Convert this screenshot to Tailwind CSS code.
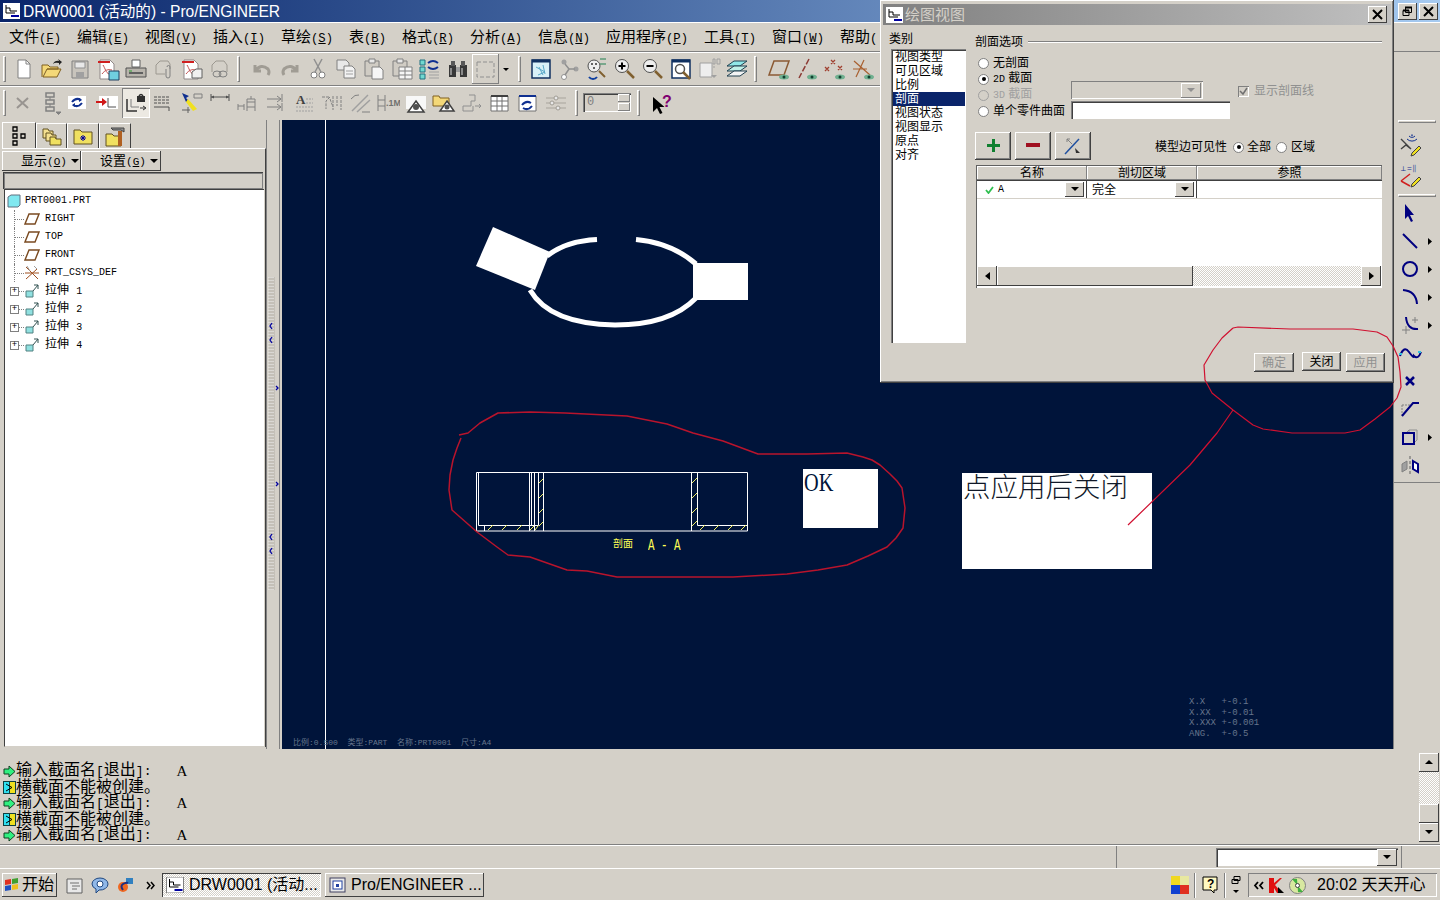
<!DOCTYPE html>
<html lang="zh">
<head>
<meta charset="UTF-8" />
<title>DRW0001 - Pro/ENGINEER</title>
<script src="https://cdn.jsdelivr.net/npm/@tailwindcss/browser@4"></script>
</head>
<body class="bg-[#d4d0c8]">
<div class="relative w-[1440px] h-[900px] overflow-hidden flex flex-col bg-[#d4d0c8] text-black font-['Liberation_Sans','Noto_Sans_CJK_SC',sans-serif]">

  <!-- title bar -->
  <div class="h-[22px] flex-none flex items-center justify-between bg-gradient-to-r from-[#0a246a] to-[#a6caf0] pl-[3px] pr-[2px]">
    <div class="flex items-center gap-[3px]">
      <svg width="17" height="16" viewBox="0 0 17 16"><rect width="17" height="16" fill="#fff"/><path d="M3 2v8h9" fill="none" stroke="#000"/><path d="M3 5h4v3h7" fill="none" stroke="#000"/><path d="M8 13h8" stroke="#0000a0" stroke-width="2"/></svg>
      <span class="text-white text-[15.600px] leading-[22px] pt-[1px]">DRW0001 (活动的) - Pro/ENGINEER</span>
    </div>
    <div class="flex gap-[2px]">
      <div class="w-[19px] h-[17px] flex items-center justify-center bg-[#d4d0c8] shadow-[inset_-1px_-1px_0_#404040,inset_1px_1px_0_#fff]"><svg width="11" height="11" viewBox="0 0 11 11"><path d="M3.5 1.5h6v5h-6zM1 4.5h6v5H1z" fill="#d4d0c8" stroke="#000"/><path d="M3 1.5h7M1 4.5h6" stroke="#000" stroke-width="2"/></svg></div>
      <div class="w-[19px] h-[17px] flex items-center justify-center bg-[#d4d0c8] shadow-[inset_-1px_-1px_0_#404040,inset_1px_1px_0_#fff]"><svg width="11" height="11" viewBox="0 0 11 11"><path d="M1 1l9 9M10 1l-9 9" stroke="#000" stroke-width="2"/></svg></div>
    </div>
  </div>

  <div class="h-[727px] flex-none flex">
    <!-- centre column -->
    <div class="w-[1393px] flex-none flex flex-col">
      <!-- menu -->
      <div class="h-[30px] flex-none flex items-center gap-[16px] pl-[9px] pt-[1px] text-[15px] leading-[28px] border-t border-white border-b border-b-[#808080] whitespace-nowrap">
        <span>文件<span class="font-['Liberation_Mono'] text-[12.200px]">(<u>F</u>)</span></span>
        <span>编辑<span class="font-['Liberation_Mono'] text-[12.200px]">(<u>E</u>)</span></span>
        <span>视图<span class="font-['Liberation_Mono'] text-[12.200px]">(<u>V</u>)</span></span>
        <span>插入<span class="font-['Liberation_Mono'] text-[12.200px]">(<u>I</u>)</span></span>
        <span>草绘<span class="font-['Liberation_Mono'] text-[12.200px]">(<u>S</u>)</span></span>
        <span>表<span class="font-['Liberation_Mono'] text-[12.200px]">(<u>B</u>)</span></span>
        <span>格式<span class="font-['Liberation_Mono'] text-[12.200px]">(<u>R</u>)</span></span>
        <span>分析<span class="font-['Liberation_Mono'] text-[12.200px]">(<u>A</u>)</span></span>
        <span>信息<span class="font-['Liberation_Mono'] text-[12.200px]">(<u>N</u>)</span></span>
        <span>应用程序<span class="font-['Liberation_Mono'] text-[12.200px]">(<u>P</u>)</span></span>
        <span>工具<span class="font-['Liberation_Mono'] text-[12.200px]">(<u>T</u>)</span></span>
        <span>窗口<span class="font-['Liberation_Mono'] text-[12.200px]">(<u>W</u>)</span></span>
        <span>帮助<span class="font-['Liberation_Mono'] text-[12.200px]">(</span></span>
      </div>

      <!-- toolbar 1 -->
      <div class="h-[34px] flex-none flex items-center border-t border-white border-b border-b-[#808080] [&>svg]:flex-none [&>svg]:mx-[2px]">
        <div class="w-[3px] h-[26px] ml-[3px] mr-[4px] border border-white border-r-[#808080] border-b-[#808080]"></div>
        <svg width="24" height="24" viewBox="0 0 24 24"><path d="M6 3h8l4 4v14H6z" fill="#fff" stroke="#808080"/><path d="M14 3v4h4" fill="none" stroke="#808080"/></svg>
        <svg width="24" height="24" viewBox="0 0 24 24"><path d="M2 20V8h6l2 2h8v2H7L3 20h14l4-8H7" fill="#f4d878" stroke="#806020"/><path d="M13 7q2-4 6-3l-1-2 4 3-3 3v-2q-4-1-6 1" fill="#222"/></svg>
        <svg width="24" height="24" viewBox="0 0 24 24"><path d="M4 4h16v17H4z" fill="#c8c4bc" stroke="#808080"/><path d="M7 5h10v6H7z" fill="#e8e8e8" stroke="#909090"/><path d="M8 15h8v6H8z" fill="#a0a0a0"/></svg>
        <svg width="24" height="24" viewBox="0 0 24 24"><path d="M4 3h10l4 4v15H4z" fill="#fff" stroke="#908888"/><path d="M2 5h12" stroke="#d02020" stroke-width="2"/><path d="M7 8c2 3 3 8 6 9M6 17c3-4 6-5 10-4" fill="none" stroke="#c05050"/><path d="M13 14h10v9H13z" fill="#70d0e0" stroke="#204060"/></svg>
        <svg width="24" height="24" viewBox="0 0 24 24"><path d="M8 3h8v7H8z" fill="#fff" stroke="#606060"/><path d="M2 11h20v9H2z" fill="#b8b4ac" stroke="#505050"/><path d="M5 16h14" stroke="#606060" stroke-width="2"/><path d="M5 14h3" stroke="#30a030"/></svg>
        <svg width="24" height="24" viewBox="0 0 24 24"><path d="M4 17V8l4-4h8l2 3v5M4 17h9" fill="none" stroke="#9c9890"/><path d="M14 12v7a2 2 0 004 0v-9a1.500 1.500 0 00-3 0" fill="none" stroke="#808080"/></svg>
        <svg width="24" height="24" viewBox="0 0 24 24"><path d="M4 3h10l4 4v15H4z" fill="#fff" stroke="#908888"/><path d="M2 5h12" stroke="#d02020" stroke-width="2"/><path d="M7 8c2 3 3 8 6 9M6 17c3-4 6-5 10-4" fill="none" stroke="#c05050"/><path d="M12 15l4-3h6v9H12z" fill="#f0f0f0" stroke="#606060"/></svg>
        <svg width="24" height="24" viewBox="0 0 24 24"><path d="M4 15V8l4-4h8l3 4v7" fill="none" stroke="#9c9890"/><ellipse cx="9" cy="17" rx="4" ry="3" fill="none" stroke="#808080"/><ellipse cx="15" cy="17" rx="4" ry="3" fill="none" stroke="#808080"/></svg>
        <div class="w-[3px] h-[26px] ml-[3px] mr-[8px] border border-white border-r-[#808080] border-b-[#808080]"></div>
        <svg width="24" height="24" viewBox="0 0 24 24"><path d="M5 8v6h6M5 14q6-8 13-2 2 3 0 6" fill="none" stroke="#a09c94" stroke-width="3"/></svg>
        <svg width="24" height="24" viewBox="0 0 24 24"><path d="M19 8v6h-6M19 14q-6-8-13-2-2 3 0 6" fill="none" stroke="#a09c94" stroke-width="3"/></svg>
        <svg width="24" height="24" viewBox="0 0 24 24"><path d="M8 2l7 13M16 2L9 15" stroke="#909090" stroke-width="1.500"/><circle cx="8" cy="18" r="3" fill="#fff" stroke="#808080"/><circle cx="16" cy="18" r="3" fill="#fff" stroke="#808080"/></svg>
        <svg width="24" height="24" viewBox="0 0 24 24"><path d="M3 3h9l3 3v7H3z" fill="#e8e8e8" stroke="#808080"/><path d="M10 9h8l3 3v9H10z" fill="#f2f2f2" stroke="#808080"/><path d="M12 14h7M12 17h7" stroke="#a0a0a0"/></svg>
        <svg width="24" height="24" viewBox="0 0 24 24"><path d="M3 4h14v15H3z" fill="#d0ccc4" stroke="#808080"/><path d="M7 2h6v4H7z" fill="#e8e8e8" stroke="#808080"/><path d="M10 10h8l3 3v9H10z" fill="#f6f6f6" stroke="#808080"/></svg>
        <svg width="24" height="24" viewBox="0 0 24 24"><path d="M3 4h14v15H3z" fill="#d0ccc4" stroke="#808080"/><path d="M7 2h6v4H7z" fill="#e8e8e8" stroke="#808080"/><path d="M9 10h13v12H9zM9 14h13M9 18h13M15 10v12" fill="#f6f6f6" stroke="#808080"/></svg>
        <svg width="24" height="24" viewBox="0 0 24 24"><path d="M2 3h5v5H2zM2 10h5v5H2zM2 17h5v5H2z" fill="#70d8d0" stroke="#207080"/><path d="M10 6q5-4 10 0M20 10q-5 4-10 0" fill="none" stroke="#103090" stroke-width="2"/><path d="M11 15h10M11 18h10M11 21h10" stroke="#a0a0a0"/></svg>
        <svg width="24" height="24" viewBox="0 0 24 24"><path d="M3 8h7v12H3zM14 8h7v12h-7z" fill="#383838"/><path d="M5 4h4v5H5zM15 4h4v5h-4z" fill="#585858"/><path d="M10 10h4v5h-4z" fill="#a0a0a0"/><path d="M5 11v7M16 11v7" stroke="#ddd"/></svg>
        <div class="w-[27px] h-[30px] flex-none flex items-center justify-center shadow-[inset_-1px_-1px_0_#808080,inset_1px_1px_0_#fff]"><svg width="19" height="17" viewBox="0 0 19 17"><rect x="1" y="1" width="17" height="15" fill="none" stroke="#909090" stroke-dasharray="4 2"/></svg></div>
        <svg width="14" height="24" viewBox="0 0 14 24" class="!mx-0"><path d="M4 11h6l-3 3z" fill="#000"/></svg>
        <div class="w-[3px] h-[26px] ml-[5px] mr-[6px] border border-white border-r-[#808080] border-b-[#808080]"></div>
        <svg width="24" height="24" viewBox="0 0 24 24"><path d="M3 3h18v18H3z" fill="#d8f0f8" stroke="#103060" stroke-width="1.500"/><path d="M3 4h18" stroke="#103060" stroke-width="3"/><path d="M7 10l9 5-7 3M10 10l4 8M14 8l2 9" fill="none" stroke="#58a8c8"/></svg>
        <svg width="24" height="24" viewBox="0 0 24 24"><circle cx="7" cy="5" r="2.500" fill="#a0a0a0"/><circle cx="19" cy="12" r="2.500" fill="#a0a0a0"/><circle cx="7" cy="20" r="2.500" fill="#fff" stroke="#909090"/><path d="M8 7l4 5h6M12 12l-4 6" fill="none" stroke="#909090" stroke-width="1.500"/></svg>
        <svg width="24" height="24" viewBox="0 0 24 24"><circle cx="9" cy="9" r="6" fill="#eee" stroke="#505050"/><circle cx="7" cy="7" r="1" fill="#333"/><circle cx="11" cy="7" r="1" fill="#333"/><circle cx="9" cy="11" r="1" fill="#333"/><path d="M14 14l6 6" stroke="#806030" stroke-width="2"/><path d="M15 2h6M15 7h6" stroke="#208050"/><path d="M4 20a5 5 0 008 0" fill="none" stroke="#1040a0" stroke-width="2"/></svg>
        <svg width="24" height="24" viewBox="0 0 24 24"><circle cx="9" cy="9" r="6.500" fill="#eee" stroke="#505050"/><path d="M5.500 9h7M9 5.500v7" stroke="#000" stroke-width="2"/><path d="M14 14l7 7" stroke="#806030" stroke-width="2.500"/></svg>
        <svg width="24" height="24" viewBox="0 0 24 24"><circle cx="9" cy="9" r="6.500" fill="#eee" stroke="#505050"/><path d="M5.500 9h7" stroke="#000" stroke-width="2"/><path d="M14 14l7 7" stroke="#806030" stroke-width="2.500"/></svg>
        <svg width="24" height="24" viewBox="0 0 24 24"><path d="M3 3h18v18H3z" fill="#fff" stroke="#103060" stroke-width="1.500"/><path d="M3 4h18" stroke="#103060" stroke-width="3"/><circle cx="11" cy="12" r="4.500" fill="none" stroke="#505050" stroke-width="1.500"/><path d="M14 15l7 7" stroke="#806030" stroke-width="2.500"/></svg>
        <svg width="24" height="24" viewBox="0 0 24 24"><path d="M3 6h12v14H3z" fill="#eee" stroke="#a0a0a0"/><path d="M16 2h2v5h-2zM20 2h3v5h-3zM16 10h2" stroke="#a0a0a0" fill="none"/><path d="M14 18h6l-3 3z" fill="#a0a0a0"/></svg>
        <svg width="24" height="24" viewBox="0 0 24 24"><path d="M2 9l7-5h13l-7 5z" fill="#90e8e8" stroke="#204050"/><path d="M2 14l7-5h13l-7 5z" fill="#c0f0e8" stroke="#204050"/><path d="M2 19l7-5h13l-7 5z" fill="#f4f4f4" stroke="#204050"/></svg>
        <div class="w-[3px] h-[26px] ml-[3px] mr-[8px] border border-white border-r-[#808080] border-b-[#808080]"></div>
        <svg width="24" height="24" viewBox="0 0 24 24"><path d="M7 4h15l-5 14H2z" fill="none" stroke="#8b5a34" stroke-width="1.500"/><ellipse cx="17" cy="20" rx="5" ry="2.500" fill="#70b090"/><circle cx="17" cy="20" r="1.500" fill="#104030"/></svg>
        <svg width="24" height="24" viewBox="0 0 24 24"><path d="M14 2L4 21" stroke="#8b3a34" stroke-width="1.500" stroke-dasharray="6 2"/><ellipse cx="17" cy="20" rx="5" ry="2.500" fill="#70b090"/><circle cx="17" cy="20" r="1.500" fill="#104030"/></svg>
        <svg width="24" height="24" viewBox="0 0 24 24"><path d="M8 3l4 4M12 3L8 7M2 10l4 4M6 10l-4 4M15 9l4 4M19 9l-4 4" stroke="#a04030" stroke-width="1.300"/><ellipse cx="17" cy="20" rx="5" ry="2.500" fill="#70b090"/><circle cx="17" cy="20" r="1.500" fill="#104030"/></svg>
        <svg width="24" height="24" viewBox="0 0 24 24"><path d="M3 4l16 14M13 3L5 20M2 12h14" stroke="#a86030" stroke-width="1.200"/><ellipse cx="18" cy="20" rx="5" ry="2.500" fill="#70b090"/><circle cx="18" cy="20" r="1.500" fill="#104030"/></svg>
      </div>

      <!-- toolbar 2 -->
      <div class="h-[34px] flex-none flex items-center border-t border-white pb-[2px] [&>svg]:flex-none [&>svg]:mx-[2px]">
        <div class="w-[3px] h-[26px] ml-[3px] mr-[3px] border border-white border-r-[#808080] border-b-[#808080]"></div>
        <svg width="24" height="24" viewBox="0 0 24 24"><path d="M6 7l11 10M17 7L6 17" stroke="#989490" stroke-width="2"/></svg>
        <svg width="24" height="24" viewBox="0 0 24 24"><path d="M7 2h8v4H7zM7 9h8v4H7zM7 16h8v4H7z" fill="none" stroke="#808080" stroke-width="1.500"/><path d="M11 6v3M11 13v3M17 21h5l-2.500 2.500z" stroke="#808080" fill="#808080"/></svg>
        <svg width="24" height="24" viewBox="0 0 24 24"><rect x="1" y="5" width="18" height="13" fill="#fff"/><path d="M5 11q4-5 9-2M15 12q-4 5-9 2" fill="none" stroke="#103090" stroke-width="2"/><path d="M12 7l3 2-3 2M8 12l-3 2 3 2" fill="#103090"/></svg>
        <svg width="24" height="24" viewBox="0 0 24 24"><rect x="4" y="5" width="19" height="13" fill="#fff"/><path d="M13 7v9h8" fill="none" stroke="#505050"/><path d="M1 11h8" stroke="#d01818" stroke-width="2"/><path d="M7 7l5 4-5 4z" fill="#d01818"/></svg>
        <div class="w-[28px] h-[30px] ml-[1px] flex-none flex items-center justify-center bg-[#ece9e2] shadow-[inset_1px_1px_0_#808080,inset_-1px_-1px_0_#fff]"><svg width="24" height="24" viewBox="0 0 24 24"><path d="M3 8v12h10" fill="none" stroke="#303030" stroke-width="1.500"/><path d="M7 8v8h8" fill="none" stroke="#808080"/><path d="M13 5h8v6h-8z" fill="#303030"/><path d="M15 5q2-3 4 0" fill="none" stroke="#303030" stroke-width="1.500"/><path d="M16 17h5M19 15l3 2-3 2" stroke="#303030" fill="none"/></svg></div>
        <svg width="24" height="24" viewBox="0 0 24 24"><path d="M2 6h16M2 9h16M2 12h16" stroke="#505050" stroke-dasharray="3 1"/><path d="M2 16h15v4" fill="none" stroke="#505050"/></svg>
        <svg width="24" height="24" viewBox="0 0 24 24"><path d="M2 2l7 3-3 2 3 3-3 1z" fill="#103090"/><path d="M8 8l9 10-4 2-7-9z" fill="#f0e020"/><path d="M14 3h8v4h-8z" fill="none" stroke="#808080"/><path d="M2 19h8M8 16v6" stroke="#606060"/></svg>
        <svg width="24" height="24" viewBox="0 0 24 24"><path d="M3 3v7M21 3v7M3 6h18" stroke="#505050"/><path d="M3 6l3-1.500v3zM21 6l-3-1.500v3z" fill="#505050"/></svg>
        <svg width="24" height="24" viewBox="0 0 24 24"><path d="M2 15h6M2 13v6M8 13v6M11 20V8h8v12M11 11h8M11 16h8M15 5v3" fill="none" stroke="#808080"/></svg>
        <svg width="24" height="24" viewBox="0 0 24 24"><path d="M3 8h14M3 16h14M18 3v8M18 12v8M13 5l4 3-4 3M13 13l4 3-4 3" fill="none" stroke="#808080"/></svg>
        <svg width="24" height="24" viewBox="0 0 24 24" class="!ml-[2px]"><text x="4" y="13" font-size="13" font-weight="700" font-family="Liberation Serif" fill="#404040">A</text><path d="M14 8h7M14 12h7M4 16h17M4 20h17" stroke="#a0a0a0" stroke-dasharray="2 1"/></svg>
        <svg width="24" height="24" viewBox="0 0 24 24"><path d="M2 6h8l-4 4v8M13 5v14M17 5v10M21 5v14M10 8l3 8" fill="none" stroke="#808080" stroke-dasharray="3 1"/></svg>
        <svg width="24" height="24" viewBox="0 0 24 24"><path d="M4 20L20 4M9 21L22 9" stroke="#a0a0a0" stroke-width="1.500"/><path d="M3 8q4-5 8-4" fill="none" stroke="#808080"/><path d="M14 21h8" stroke="#808080"/></svg>
        <svg width="24" height="24" viewBox="0 0 24 24"><path d="M2 4v16M9 4v16M2 9h7M2 15h7" stroke="#808080"/><text x="10" y="15" font-size="9" font-weight="700" font-family="Liberation Sans" fill="#707070">.1M</text></svg>
        <svg width="24" height="24" viewBox="0 0 24 24"><rect x="2" y="5" width="20" height="13" fill="#f8f8f8"/><path d="M12 10l8 11H4z" fill="#fff" stroke="#404040" stroke-width="1.500"/><circle cx="12" cy="16" r="3" fill="#505050"/></svg>
        <svg width="24" height="24" viewBox="0 0 24 24"><path d="M1 5h6l1 2h9v8H1z" fill="#f4d878" stroke="#806020"/><path d="M15 10l7 10H8z" fill="#fff" stroke="#404040" stroke-width="1.500"/><circle cx="15" cy="16" r="2.500" fill="#505050"/></svg>
        <svg width="24" height="24" viewBox="0 0 24 24"><path d="M9 4h6v6h-4v5H3v5h10v-5" fill="none" stroke="#909090"/><path d="M15 15h6M19 13l2 2-2 2" fill="none" stroke="#909090"/></svg>
        <svg width="24" height="24" viewBox="0 0 24 24"><path d="M3 5h17v15H3zM3 10h17M3 15h17M9 5v15M14 5v15" fill="#fff" stroke="#707070"/><path d="M3 5h17" stroke="#404040" stroke-width="2"/></svg>
        <svg width="24" height="24" viewBox="0 0 24 24"><path d="M3 5h17v15H3z" fill="#fff" stroke="#707070"/><path d="M3 5h17" stroke="#103090" stroke-width="2"/><path d="M6 14q4-5 9-2M16 15q-4 5-9 2" fill="none" stroke="#103090" stroke-width="2"/></svg>
        <svg width="24" height="24" viewBox="0 0 24 24"><path d="M2 7h20M2 12h20M2 17h20" stroke="#a8a49c"/><circle cx="12" cy="7" r="2" fill="#e8e8e8" stroke="#a09c94"/><circle cx="8" cy="12" r="2" fill="#e8e8e8" stroke="#a09c94"/><circle cx="14" cy="17" r="2" fill="#e8e8e8" stroke="#a09c94"/></svg>
        <div class="w-[3px] h-[26px] ml-[5px] mr-[5px] border border-white border-r-[#808080] border-b-[#808080]"></div>
        <div class="w-[48px] h-[19px] flex-none flex justify-between bg-[#d4d0c8] shadow-[inset_1px_1px_0_#808080,inset_2px_2px_0_#404040,inset_-1px_-1px_0_#fff]">
          <span class="font-['Liberation_Mono'] text-[12px] leading-[19px] pl-[4px] text-[#808080]">0</span>
          <div class="w-[14px] p-[1px] flex flex-col gap-[1px]">
            <div class="flex-1 bg-[#d4d0c8] shadow-[inset_-1px_-1px_0_#808080,inset_1px_1px_0_#fff]"></div>
            <div class="flex-1 bg-[#d4d0c8] shadow-[inset_-1px_-1px_0_#808080,inset_1px_1px_0_#fff]"></div>
          </div>
        </div>
        <div class="w-[3px] h-[26px] ml-[6px] mr-[8px] border border-white border-r-[#808080] border-b-[#808080]"></div>
        <svg width="24" height="24" viewBox="0 0 24 24"><path d="M3 6v15l4-4 3 6 2.500-1-3-6h5z" fill="#000"/><text x="12" y="16" font-size="16" font-weight="700" font-family="Liberation Sans" fill="#800070">?</text></svg>
      </div>

      <!-- main -->
      <div class="flex-1 flex min-h-0">
        <!-- model tree panel -->
        <div class="w-[282px] flex-none flex">
          <div class="w-[266px] flex-none flex flex-col pl-[2px] pt-[2px] pb-[2px]">
            <div class="flex h-[26px] flex-none items-end">
              <div class="w-[34px] h-[26px] flex items-center justify-center border-t border-l border-white border-r border-r-[#404040]"><svg width="16" height="20" viewBox="0 0 16 20"><path d="M2 1h4v4H2zM2 8h4v4H2zM2 15h4v4H2zM10 8h4v4h-4z" fill="none" stroke="#000" stroke-width="1.300"/></svg></div>
              <div class="w-[31px] h-[25px] flex items-center justify-center border-t border-l border-white border-r border-r-[#404040]"><svg width="20" height="20" viewBox="0 0 20 20"><path d="M1 3h5l1 2h4v7H1z" fill="#f4e090" stroke="#605020"/><path d="M4 7h5l1 2h4v6H4z" fill="#f4e090" stroke="#605020"/><path d="M8 11h5l1 2h5v6H8z" fill="#f0e060" stroke="#605020"/></svg></div>
              <div class="w-[32px] h-[25px] flex items-center justify-center border-t border-l border-white border-r border-r-[#404040]"><svg width="20" height="20" viewBox="0 0 20 20"><path d="M1 4h6l2 2h10v12H1z" fill="#f0e060" stroke="#605020"/><path d="M10 9v6M7 12h6M8 10l4 4M12 10l-4 4" stroke="#0000a0"/></svg></div>
              <div class="w-[32px] h-[25px] flex items-center justify-center border-t border-l border-white border-r border-r-[#404040]"><svg width="20" height="22" viewBox="0 0 20 22"><path d="M1 9h6l2 2h7v10H1z" fill="#f0e060" stroke="#605020"/><path d="M6 3h13v4l-3-2H8z" fill="#909090" stroke="#404040"/><path d="M13 6h4v15h-4z" fill="#b06020"/></svg></div>
            </div>
            <div class="flex-1 flex flex-col border-t border-white border-r border-r-[#404040] pt-[2px] pr-[1px]">
              <div class="flex h-[20px] flex-none text-[13px] whitespace-nowrap">
                <div class="w-[79px] flex items-center justify-start pl-[19px] gap-[4px] shadow-[inset_-1px_-1px_0_#404040,inset_1px_1px_0_#fff]"><span>显示<span class="font-['Liberation_Mono'] text-[11px]">(<u>O</u>)</span></span><svg width="8" height="5" viewBox="0 0 8 5"><path d="M0 0h8L4 4z" fill="#000"/></svg></div>
                <div class="w-[80px] flex items-center justify-start pl-[19px] gap-[4px] shadow-[inset_-1px_-1px_0_#404040,inset_1px_1px_0_#fff]"><span>设置<span class="font-['Liberation_Mono'] text-[11px]">(<u>G</u>)</span></span><svg width="8" height="5" viewBox="0 0 8 5"><path d="M0 0h8L4 4z" fill="#000"/></svg></div>
              </div>
              <div class="h-[17px] flex-none mt-[1px] ml-[1px] mr-[1px] shadow-[inset_1px_1px_0_#404040,inset_-1px_-1px_0_#808080,inset_2px_2px_0_#808080]"></div>
              <!-- tree -->
              <div class="flex-1 ml-[2px] bg-white border-l border-[#404040] border-t border-t-[#404040] border-b border-b-[#d4d0c8] pt-[2px] font-['Liberation_Mono','Noto_Sans_CJK_SC',monospace] text-[10px] leading-[18px] whitespace-nowrap">
                <div class="flex items-center h-[18px] pl-[2px] gap-[4px]">
                  <svg width="14" height="14" viewBox="0 0 14 14"><path d="M1 3l3-2h9v10l-2 2H1z" fill="#80e8f0" stroke="#607080"/></svg><span>PRT0001.PRT</span>
                </div>
                <div class="flex items-center h-[18px] pl-[9px]"><span class="h-full w-[10px] border-l border-dotted border-[#808080] flex items-center"><span class="w-full border-t border-dotted border-[#808080]"></span></span><svg width="16" height="12" viewBox="0 0 16 12" class="mr-[5px]"><path d="M5 1h10l-4 10H1z" fill="none" stroke="#7a4a20" stroke-width="1.400"/></svg><span>RIGHT</span></div>
                <div class="flex items-center h-[18px] pl-[9px]"><span class="h-full w-[10px] border-l border-dotted border-[#808080] flex items-center"><span class="w-full border-t border-dotted border-[#808080]"></span></span><svg width="16" height="12" viewBox="0 0 16 12" class="mr-[5px]"><path d="M5 1h10l-4 10H1z" fill="none" stroke="#7a4a20" stroke-width="1.400"/></svg><span>TOP</span></div>
                <div class="flex items-center h-[18px] pl-[9px]"><span class="h-full w-[10px] border-l border-dotted border-[#808080] flex items-center"><span class="w-full border-t border-dotted border-[#808080]"></span></span><svg width="16" height="12" viewBox="0 0 16 12" class="mr-[5px]"><path d="M5 1h10l-4 10H1z" fill="none" stroke="#7a4a20" stroke-width="1.400"/></svg><span>FRONT</span></div>
                <div class="flex items-center h-[18px] pl-[9px]"><span class="h-full w-[10px] border-l border-dotted border-[#808080] flex items-center"><span class="w-full border-t border-dotted border-[#808080]"></span></span><svg width="16" height="16" viewBox="0 0 16 16" class="mr-[5px]"><path d="M2 2l12 12M2 14L13 4M1 8h14" stroke="#a05020"/><path d="M3 1l3 5M10 1l3 3" stroke="#a0a0a0"/></svg><span>PRT_CSYS_DEF</span></div>
                <div class="flex items-center h-[18px] pl-[5px]"><span class="w-[9px] h-[9px] flex-none flex items-center justify-center bg-white border border-[#808080] text-[9px] leading-none">+</span><span class="w-[5px] border-t border-dotted border-[#808080]"></span><svg width="16" height="14" viewBox="0 0 16 14" class="mr-[5px]"><path d="M2 7h7v6H2z" fill="#90e0e0" stroke="#508080"/><path d="M9 7l5-6M14 1h-4M14 1v4" fill="none" stroke="#305050"/></svg><span class="text-[12px]">拉伸&nbsp;<span class="text-[10px]">1</span></span></div>
                <div class="flex items-center h-[18px] pl-[5px]"><span class="w-[9px] h-[9px] flex-none flex items-center justify-center bg-white border border-[#808080] text-[9px] leading-none">+</span><span class="w-[5px] border-t border-dotted border-[#808080]"></span><svg width="16" height="14" viewBox="0 0 16 14" class="mr-[5px]"><path d="M2 7h7v6H2z" fill="#90e0e0" stroke="#508080"/><path d="M9 7l5-6M14 1h-4M14 1v4" fill="none" stroke="#305050"/></svg><span class="text-[12px]">拉伸&nbsp;<span class="text-[10px]">2</span></span></div>
                <div class="flex items-center h-[18px] pl-[5px]"><span class="w-[9px] h-[9px] flex-none flex items-center justify-center bg-white border border-[#808080] text-[9px] leading-none">+</span><span class="w-[5px] border-t border-dotted border-[#808080]"></span><svg width="16" height="14" viewBox="0 0 16 14" class="mr-[5px]"><path d="M2 7h7v6H2z" fill="#90e0e0" stroke="#508080"/><path d="M9 7l5-6M14 1h-4M14 1v4" fill="none" stroke="#305050"/></svg><span class="text-[12px]">拉伸&nbsp;<span class="text-[10px]">3</span></span></div>
                <div class="flex items-center h-[18px] pl-[5px]"><span class="w-[9px] h-[9px] flex-none flex items-center justify-center bg-white border border-[#808080] text-[9px] leading-none">+</span><span class="w-[5px] border-t border-dotted border-[#808080]"></span><svg width="16" height="14" viewBox="0 0 16 14" class="mr-[5px]"><path d="M2 7h7v6H2z" fill="#90e0e0" stroke="#508080"/><path d="M9 7l5-6M14 1h-4M14 1v4" fill="none" stroke="#305050"/></svg><span class="text-[12px]">拉伸&nbsp;<span class="text-[10px]">4</span></span></div>
              </div>
            </div>
          </div>
          <!-- sash with collapse arrows -->
          <svg width="16" height="629" viewBox="0 0 16 629" class="flex-none">
            <path d="M.5 0v629M13.500 0v629" stroke="#808080"/>
            <path d="M3 157h6v313H3z" fill="#c4c0b8"/>
            <path d="M3 157v313M5 157v313M7 157v313" stroke="#efefef" stroke-dasharray="1 2"/>
            <path d="M6 203l-2 3 2 3M6 217l-2 3 2 3M6 414l-2 3 2 3M6 428l-2 3 2 3" fill="none" stroke="#0000a0" stroke-width="1.300"/>
            <path d="M10 266l2 2-2 2M10 362l2 2-2 2" fill="none" stroke="#0000a0" stroke-width="1.300"/>
          </svg>
        </div>

        <!-- drawing canvas, coordinates on it are the drawing itself -->
        <div class="relative flex-1 bg-[#00143a] overflow-hidden">
          <svg class="absolute left-0 top-0" width="1111" height="629" viewBox="282 120 1111 629">
            <path d="M325.500 120v629" stroke="#fff"/>
            <path d="M493 227l57 25-15 38-59-24z" fill="#fff"/>
            <rect x="693" y="263" width="55" height="37" fill="#fff"/>
            <path d="M547 256Q566 241 597 239.500M636 239.500Q672 243 696 264M530 290Q550 324 615 325Q670 325 696 298" fill="none" stroke="#fff" stroke-width="5"/>
            <path d="M476.500 472.500h271v58.500h-271zM478.500 472.500v53h60M529.500 472.500v58.500M531.500 472.500v53M534.500 472.500v58.500M538.500 472.500v53M543.500 472.500v58.500M691.500 472.500v58.500M697.500 472.500v53h50M484.500 525.500v5.500" fill="none" stroke="#fff"/>
            <path d="M539 483l4-4M539 498l4-4M539 513l4-4M539 526l4-4M692 483l5-5M692 498l5-5M692 513l5-5M692 526l5-5M488 530l5-5M502 530l5-5M517 530l5-5M530 530l4-4M535 530l3-4M700 530l5-5M714 530l5-5M728 530l5-5M741 530l5-5" stroke="#f0f060"/>
            <rect x="803" y="469" width="75" height="59" fill="#fff"/>
            <rect x="962" y="473" width="190" height="96" fill="#fff"/>
          </svg>
          <span class="absolute left-[331px] top-[417px] text-[10px] leading-[14px] text-[#ffff55]">剖面</span>
          <span class="absolute left-[366px] top-[416px] font-['Liberation_Mono'] text-[16px] leading-[20px] text-[#ffff55] whitespace-pre scale-x-[.68] origin-left">A - A</span>
          <span class="absolute left-[522px] top-[349px] font-['Liberation_Serif'] text-[26px] leading-[28px] text-[#00143a] scale-x-[.78] origin-left">OK</span>
          <span class="absolute left-[681px] top-[352px] text-[27.500px] leading-[32px] font-light text-[#101828] whitespace-nowrap">点应用后关闭</span>
          <div class="absolute left-[907px] top-[577px] font-['Liberation_Mono'] text-[9px] leading-[10.500px] text-[#66748c] whitespace-pre">X.X   +-0.1
X.XX  +-0.01
X.XXX +-0.001
ANG.  +-0.5</div>
          <div class="absolute left-[11px] top-[617px] font-['Liberation_Mono','Noto_Sans_CJK_SC',monospace] text-[8px] leading-[12px] text-[#66748c] whitespace-pre">比例:0.500  类型:PART  名称:PRT0001  尺寸:A4</div>
        </div>
      </div>
    </div>

    <!-- right sketch toolbar -->
    <div class="w-[47px] flex-none flex flex-col border-l border-[#808080]">
      <div class="h-[30px] flex-none border-t border-white border-b border-b-[#808080]"></div>
      <div class="h-[68px] flex-none"></div>
      <div class="h-[3px] w-[38px] mx-auto flex-none border border-white border-r-[#808080] border-b-[#808080]"></div>
      <div class="flex flex-col items-start pl-[4px] pt-[11px] gap-[6px] flex-none h-[71px]">
        <svg width="26" height="24" viewBox="0 0 26 24"><path d="M3 5l10 10M3 15l5-4 5 4" fill="none" stroke="#404040" stroke-width="1.400"/><path d="M11 2a4 4 0 006 0M13 1a2 2 0 002 0M9 5a7 7 0 0010 0" fill="none" stroke="#103090"/><path d="M14 19l7-7 2 2-7 7-3 1z" fill="#f0e020" stroke="#404040"/></svg>
        <svg width="26" height="24" viewBox="0 0 26 24"><text x="2" y="7" font-size="8" font-family="Liberation Mono" fill="#103090">⊥=∥</text><path d="M3 17l9-7M3 17l9 5" stroke="#d02020" stroke-width="1.500"/><path d="M14 20l7-7 2 2-7 7-3 1z" fill="#f0e020" stroke="#404040"/></svg>
      </div>
      <div class="h-[3px] w-[38px] mx-auto flex-none border border-white border-r-[#808080] border-b-[#808080]"></div>
      <div class="flex-none flex flex-col pt-[2px] pb-[3px] border-b border-[#808080] [&>div]:h-[28px] [&>div]:flex [&>div]:items-center [&>div]:pl-[5px] [&>div]:gap-[7px]">
        <div><svg width="22" height="22" viewBox="0 0 22 22"><path d="M6 2v15l3-3 3 6 2-1-3-6h4z" fill="#000080"/></svg></div>
        <div><svg width="22" height="22" viewBox="0 0 22 22"><path d="M4 4l14 14" stroke="#000080" stroke-width="2"/></svg><svg width="5" height="7" viewBox="0 0 5 7"><path d="M0 0l4 3.500L0 7z" fill="#000"/></svg></div>
        <div><svg width="22" height="22" viewBox="0 0 22 22"><circle cx="11" cy="11" r="7" fill="none" stroke="#000080" stroke-width="2"/></svg><svg width="5" height="7" viewBox="0 0 5 7"><path d="M0 0l4 3.500L0 7z" fill="#000"/></svg></div>
        <div><svg width="22" height="22" viewBox="0 0 22 22"><path d="M4 4q13 1 14 14" fill="none" stroke="#000080" stroke-width="2"/></svg><svg width="5" height="7" viewBox="0 0 5 7"><path d="M0 0l4 3.500L0 7z" fill="#000"/></svg></div>
        <div><svg width="22" height="22" viewBox="0 0 22 22"><path d="M7 3q1 13 12 12" fill="none" stroke="#000080" stroke-width="2"/><path d="M3 16h8M7 12v8M16 3v6M13 6h6" stroke="#808080"/></svg><svg width="5" height="7" viewBox="0 0 5 7"><path d="M0 0l4 3.500L0 7z" fill="#000"/></svg></div>
        <div><svg width="24" height="22" viewBox="0 0 24 22" class="-ml-[1px]"><path d="M2 14q4-11 9-4t5 4q4 4 7-4" fill="none" stroke="#000080" stroke-width="2"/><path d="M1 12h3M20 10h3" stroke="#30c0e0" stroke-width="2"/></svg></div>
        <div><svg width="22" height="22" viewBox="0 0 22 22"><path d="M7 7l8 8M15 7l-8 8" stroke="#000080" stroke-width="2.500"/></svg></div>
        <div><svg width="22" height="22" viewBox="0 0 22 22"><path d="M3 7l8 0M3 7v12" stroke="#808080" stroke-dasharray="2 1"/><path d="M3 18L14 5h6" fill="none" stroke="#000080" stroke-width="2"/></svg></div>
        <div><svg width="22" height="22" viewBox="0 0 22 22"><path d="M7 7l3-3h8v10l-3 3M10 4v3" fill="none" stroke="#909090"/><rect x="4" y="7" width="11" height="11" fill="none" stroke="#000080" stroke-width="2"/></svg><svg width="5" height="7" viewBox="0 0 5 7"><path d="M0 0l4 3.500L0 7z" fill="#000"/></svg></div>
        <div><svg width="22" height="22" viewBox="0 0 22 22"><path d="M8 7L3 10v8l5-3z" fill="#a0a0a0" stroke="#808080"/><path d="M11 2v18" stroke="#606060" stroke-dasharray="3 2"/><path d="M14 7l5 3v8l-5-3z" fill="#fff" stroke="#000080" stroke-width="2"/></svg></div>
      </div>
    </div>
  </div>

  <!-- message area -->
  <div class="h-[96px] flex-none flex justify-between border-b border-[#808080]">
    <div class="pt-[14px] pl-[3px] text-[16px] leading-[16px] whitespace-nowrap">
      <div class="flex items-center h-[16px]"><svg width="13" height="13" viewBox="0 0 13 13"><path d="M1 4h5V1l6 5.500L6 12V9H1z" fill="#30f080" stroke="#104020"/></svg><span>输入截面名<span class="font-['Liberation_Mono'] text-[13px]">[</span>退出<span class="font-['Liberation_Mono'] text-[13px]">]:</span></span><span class="font-['Liberation_Serif'] text-[15px] ml-[25px]">A</span></div>
      <div class="flex items-center h-[16px]"><svg width="13" height="13" viewBox="0 0 13 13"><rect width="6" height="12" x=".5" y=".5" fill="#30e0f0" stroke="#104040"/><rect width="6" height="12" x="6.500" y=".5" fill="#f0e020" stroke="#104040"/><path d="M3 3l6 3.500-6 3.500" fill="none" stroke="#000"/></svg><span>横截面不能被创建。</span></div>
      <div class="flex items-center h-[16px]"><svg width="13" height="13" viewBox="0 0 13 13"><path d="M1 4h5V1l6 5.500L6 12V9H1z" fill="#30f080" stroke="#104020"/></svg><span>输入截面名<span class="font-['Liberation_Mono'] text-[13px]">[</span>退出<span class="font-['Liberation_Mono'] text-[13px]">]:</span></span><span class="font-['Liberation_Serif'] text-[15px] ml-[25px]">A</span></div>
      <div class="flex items-center h-[16px]"><svg width="13" height="13" viewBox="0 0 13 13"><rect width="6" height="12" x=".5" y=".5" fill="#30e0f0" stroke="#104040"/><rect width="6" height="12" x="6.500" y=".5" fill="#f0e020" stroke="#104040"/><path d="M3 3l6 3.500-6 3.500" fill="none" stroke="#000"/></svg><span>横截面不能被创建。</span></div>
      <div class="flex items-center h-[16px]"><svg width="13" height="13" viewBox="0 0 13 13"><path d="M1 4h5V1l6 5.500L6 12V9H1z" fill="#30f080" stroke="#104020"/></svg><span>输入截面名<span class="font-['Liberation_Mono'] text-[13px]">[</span>退出<span class="font-['Liberation_Mono'] text-[13px]">]:</span></span><span class="font-['Liberation_Serif'] text-[15px] ml-[25px]">A</span></div>
    </div>
    <div class="w-[20px] mr-[1px] mt-[4px] mb-[2px] flex flex-col">
      <div class="h-[19px] flex items-center justify-center bg-[#d4d0c8] shadow-[inset_-1px_-1px_0_#404040,inset_1px_1px_0_#fff]"><svg width="8" height="5" viewBox="0 0 8 5"><path d="M4 0l4 4H0z" fill="#000"/></svg></div>
      <div class="h-[32px] bg-[repeating-conic-gradient(#fff_0_25%,#d4d0c8_0_50%)] bg-[length:2px_2px]"></div>
      <div class="h-[19px] shadow-[inset_-1px_-1px_0_#404040,inset_1px_1px_0_#fff]"></div>
      <div class="h-[19px] flex items-center justify-center shadow-[inset_-1px_-1px_0_#404040,inset_1px_1px_0_#fff]"><svg width="8" height="5" viewBox="0 0 8 5"><path d="M0 0h8L4 4z" fill="#000"/></svg></div>
    </div>
  </div>

  <!-- status bar -->
  <div class="h-[23px] flex-none flex items-center border-t border-white">
    <div class="w-[1117px] h-full border-r border-[#808080]"></div>
    <div class="w-[99px]"></div>
    <div class="w-[182px] h-[19px] flex justify-end bg-white shadow-[inset_1px_1px_0_#808080,inset_2px_2px_0_#404040,inset_-1px_-1px_0_#d4d0c8]">
      <div class="w-[20px] h-[17px] mt-[1px] mr-[1px] flex items-center justify-center bg-[#d4d0c8] shadow-[inset_-1px_-1px_0_#404040,inset_1px_1px_0_#fff]"><svg width="8" height="5" viewBox="0 0 8 5"><path d="M0 0h8L4 4z" fill="#000"/></svg></div>
    </div>
    <div class="w-[4px] h-full border-r border-[#808080]"></div>
  </div>

  <!-- taskbar -->
  <div class="h-[32px] flex-none flex items-center border-t border-white pt-[1px] pl-[2px] pr-[3px] text-[16px] whitespace-nowrap">
    <div class="w-[55px] h-[24px] flex items-center gap-[2px] pl-[2px] shadow-[inset_-1px_-1px_0_#404040,inset_1px_1px_0_#fff]">
      <svg width="16" height="16" viewBox="0 0 16 16"><path d="M1 3l6-1v5l-6 1z" fill="#e03020"/><path d="M8 2l6-1v5l-6 1z" fill="#40a030"/><path d="M1 9l6-1v5l-6 1z" fill="#2050c0"/><path d="M8 8l6-1v5l-6 1z" fill="#f0c020"/></svg>
      <span>开始</span>
    </div>
    <div class="flex items-center gap-[7px] ml-[9px] w-[96px]">
      <svg width="18" height="18" viewBox="0 0 18 18"><path d="M1 3h15v14H1z" fill="#e8e8e8" stroke="#606060"/><path d="M4 7h9M6 10h8M6 13h5" stroke="#707070"/></svg>
      <svg width="18" height="18" viewBox="0 0 18 18"><path d="M1 8a8 6 0 0116 0 8 6 0 01-9 6l-3 3v-4a8 6 0 01-4-5" fill="#90b8e8" stroke="#204880"/><circle cx="9" cy="8" r="3" fill="#fff" stroke="#204880"/></svg>
      <svg width="18" height="18" viewBox="0 0 18 18"><path d="M2 11a5 5 0 1010 0 5 5 0 10-10 0" fill="#f06820"/><path d="M10 2h7v6h-7z" fill="#3080c0"/><path d="M7 14q-3-4 0-6t5-1" fill="none" stroke="#203080" stroke-width="2"/></svg>
      <svg width="10" height="9" viewBox="0 0 10 9" class="ml-[5px]"><path d="M1 1l3 3.500L1 8M5 1l3 3.500L5 8" fill="none" stroke="#000" stroke-width="1.500"/></svg>
    </div>
    <div class="w-[159px] h-[24px] flex items-center gap-[5px] pl-[4px] bg-[repeating-conic-gradient(#fff_0_25%,#d4d0c8_0_50%)] bg-[length:2px_2px] shadow-[inset_1px_1px_0_#404040,inset_-1px_-1px_0_#fff]">
      <svg width="18" height="16" viewBox="0 0 17 16"><rect width="17" height="16" fill="#fff" stroke="#808080"/><path d="M3 2v8h9M3 5h4v3h7" fill="none" stroke="#000"/><path d="M8 13h8" stroke="#0000a0" stroke-width="2"/></svg>
      <span>DRW0001 (活动...</span>
    </div>
    <div class="w-[159px] h-[24px] ml-[4px] flex items-center gap-[5px] pl-[4px] shadow-[inset_-1px_-1px_0_#404040,inset_1px_1px_0_#fff]">
      <svg width="17" height="16" viewBox="0 0 17 16"><rect x="1" y="1" width="15" height="14" fill="#e8e8e8" stroke="#404060"/><rect x="4" y="4" width="9" height="8" fill="#fff" stroke="#2040a0"/><rect x="7" y="7" width="3" height="3" fill="#2040a0"/></svg>
      <span>Pro/ENGINEER ...</span>
    </div>
    <div class="flex-1"></div>
    <svg width="20" height="18" viewBox="0 0 20 18" class="mr-[4px]"><rect width="9" height="9" x="1" y="0" fill="#f0d820"/><rect width="9" height="9" x="10" y="0" fill="#e8e8a0"/><rect width="9" height="9" x="1" y="9" fill="#1040d0"/><rect width="9" height="9" x="10" y="9" fill="#e03020"/></svg>
    <div class="h-[25px] border-l border-[#808080] border-r-white border-r mr-[5px]"></div>
    <svg width="18" height="18" viewBox="0 0 18 18" class="mr-[5px]"><path d="M2 1h14v13h-3v3l-3-3H2z" fill="#fff8c0" stroke="#000"/><text x="6" y="12" font-size="12" font-weight="700" font-family="Liberation Sans" fill="#000">?</text></svg>
    <div class="h-[25px] border-l border-[#808080] border-r-white border-r mr-[5px]"></div>
    <svg width="10" height="20" viewBox="0 0 10 20" class="mr-[7px]"><path d="M3 1.500h6v4H3zM1 4.500h6v4H1z" fill="#d4d0c8" stroke="#000"/><path d="M2 15h6l-3 3z" fill="#000"/></svg>
    <div class="w-[189px] h-[24px] flex items-center pl-[5px] shadow-[inset_1px_1px_0_#808080,inset_-1px_-1px_0_#fff]">
      <svg width="12" height="9" viewBox="0 0 12 9"><path d="M5 1L2 4.500 5 8M10 1L7 4.500 10 8" fill="none" stroke="#000" stroke-width="1.800"/></svg>
      <svg width="18" height="17" viewBox="0 0 18 17" class="ml-[3px]"><path d="M1 1h5v5l6-5h2l-7 7 7 8H9L6 11v5H1z" fill="#e01010"/><path d="M10 10l6 6h-6z" fill="#000"/></svg>
      <svg width="17" height="17" viewBox="0 0 17 17" class="ml-[3px]"><circle cx="8.500" cy="8.500" r="8" fill="#d8e8a0" stroke="#808080"/><path d="M8.500 8.500L3 2h5zM8.500 8.500L14 15H9z" fill="#40b040"/><circle cx="8.500" cy="8.500" r="2" fill="#fff" stroke="#404040"/></svg>
      <span class="ml-[11px]">20:02 天天开心</span>
    </div>
  </div>

  <!-- floating dialog -->
  <div class="absolute left-[880px] top-0 w-[514px] h-[383px] bg-[#d4d0c8] shadow-[inset_-1px_-1px_0_#404040,inset_1px_1px_0_#fff,inset_-2px_-2px_0_#808080] p-[3px] pt-[4px] text-[12px] leading-[14px] whitespace-nowrap">
    <div class="h-[21px] flex items-center justify-between bg-gradient-to-r from-[#808080] to-[#c0c0c0] pl-[3px] pr-[4px]">
      <div class="flex items-center gap-[2px]">
        <svg width="17" height="16" viewBox="0 0 17 16"><rect width="17" height="16" fill="#fff"/><path d="M3 2v8h9M3 5h4v3h7" fill="none" stroke="#000"/><path d="M8 13h8" stroke="#0000a0" stroke-width="2"/></svg>
        <span class="text-[15px] leading-[20px] text-[#d4d0c8]">绘图视图</span>
      </div>
      <div class="w-[19px] h-[17px] flex items-center justify-center bg-[#d4d0c8] shadow-[inset_-1px_-1px_0_#404040,inset_1px_1px_0_#fff]"><svg width="11" height="11" viewBox="0 0 11 11"><path d="M1 1l9 9M10 1l-9 9" stroke="#000" stroke-width="2"/></svg></div>
    </div>
    <div class="flex">
      <!-- category list -->
      <div class="w-[92px] flex-none pl-[6px] pt-[7px]">
        <div class="leading-[14px]">类别</div>
        <div class="ml-[2px] mt-[3px] w-[75px] h-[294px] pt-[1px] bg-white shadow-[inset_1px_1px_0_#808080,inset_2px_2px_0_#404040,inset_-1px_-1px_0_#fff] pl-[2px]">
          <div class="pl-[2px]">视图类型</div>
          <div class="pl-[2px]">可见区域</div>
          <div class="pl-[2px]">比例</div>
          <div class="pl-[2px] bg-[#0a246a] text-white mr-[1px]">剖面</div>
          <div class="pl-[2px]">视图状态</div>
          <div class="pl-[2px]">视图显示</div>
          <div class="pl-[2px]">原点</div>
          <div class="pl-[2px]">对齐</div>
        </div>
      </div>
      <!-- section options -->
      <div class="w-[407px] flex-none pt-[10px]">
        <div class="flex items-center gap-[5px] h-[14px]">
          <span>剖面选项</span>
          <div class="w-[355px] h-[2px] border-t border-[#808080] border-b border-b-white"></div>
        </div>
        <div class="flex mt-[5px] h-[65px]">
          <div class="w-[96px] pl-[3px] pt-[1px] flex flex-col [&>div]:h-[16px] [&>div]:flex [&>div]:items-center [&>div]:gap-[4px]">
            <div><span class="w-[11px] h-[11px] rounded-full bg-white border border-[#808080]"></span>无剖面</div>
            <div><span class="w-[11px] h-[11px] rounded-full bg-white border border-[#808080] flex items-center justify-center"><span class="w-[4px] h-[4px] rounded-full bg-black"></span></span><span><span class="font-['Liberation_Mono'] text-[10px]">2D</span>&nbsp;截面</span></div>
            <div class="text-[#a0a0a0]"><span class="w-[11px] h-[11px] rounded-full bg-[#d4d0c8] border border-[#a0a0a0]"></span><span><span class="font-['Liberation_Mono'] text-[10px]">3D</span>&nbsp;截面</span></div>
            <div><span class="w-[11px] h-[11px] rounded-full bg-white border border-[#808080]"></span>单个零件曲面</div>
          </div>
          <div class="flex flex-col pt-[27px] gap-[2px]">
            <div class="w-[132px] h-[19px] flex justify-end shadow-[inset_1px_1px_0_#808080,inset_-1px_-1px_0_#fff]">
              <div class="w-[20px] h-[15px] mt-[2px] mr-[2px] flex items-center justify-center shadow-[inset_-1px_-1px_0_#808080,inset_1px_1px_0_#fff]"><svg width="8" height="5" viewBox="0 0 8 5"><path d="M0 0h8L4 4z" fill="#909090"/></svg></div>
            </div>
            <div class="w-[159px] h-[18px] bg-white shadow-[inset_1px_1px_0_#808080,inset_2px_2px_0_#404040,inset_-1px_-1px_0_#fff]"></div>
          </div>
          <div class="flex items-center gap-[5px] h-[14px] mt-[30px] text-[#909090]">
            <span class="w-[11px] h-[11px] ml-[8px] flex items-center justify-center bg-[#d4d0c8] shadow-[inset_1px_1px_0_#808080,inset_-1px_-1px_0_#fff]"><svg width="9" height="9" viewBox="0 0 9 9"><path d="M1 4l3 3 4-6" fill="none" stroke="#707070" stroke-width="1.500"/></svg></span>
            <span>显示剖面线</span>
          </div>
        </div>
        <div class="flex items-center mt-[13px] h-[27px]">
          <div class="w-[36px] h-[28px] flex items-center justify-center shadow-[inset_-1px_-1px_0_#404040,inset_1px_1px_0_#fff,inset_-2px_-2px_0_#808080]"><svg width="13" height="13" viewBox="0 0 13 13"><path d="M5 0h3v5h5v3H8v5H5V8H0V5h5z" fill="#108030"/></svg></div>
          <div class="w-[36px] h-[28px] ml-[4px] flex items-center justify-center shadow-[inset_-1px_-1px_0_#404040,inset_1px_1px_0_#fff,inset_-2px_-2px_0_#808080]"><svg width="14" height="5" viewBox="0 0 14 5"><rect width="14" height="4" fill="#a01020"/></svg></div>
          <div class="w-[36px] h-[28px] ml-[4px] flex items-center justify-center shadow-[inset_-1px_-1px_0_#404040,inset_1px_1px_0_#fff,inset_-2px_-2px_0_#808080]"><svg width="18" height="18" viewBox="0 0 18 18"><path d="M1 17L15 2" stroke="#2050a0" stroke-width="1.500"/><path d="M3 2l5 5M3 2h3M3 2v3" stroke="#808080" fill="none"/><path d="M11 11l5 5h-4z" fill="#303030"/></svg></div>
          <span class="ml-[64px] mt-[3px]">模型边可见性</span>
          <span class="ml-[6px] mt-[3px] w-[11px] h-[11px] rounded-full bg-white border border-[#808080] flex items-center justify-center"><span class="w-[4px] h-[4px] rounded-full bg-black"></span></span>
          <span class="ml-[3px] mt-[3px]">全部</span>
          <span class="ml-[5px] mt-[3px] w-[11px] h-[11px] rounded-full bg-white border border-[#808080]"></span>
          <span class="ml-[4px] mt-[3px]">区域</span>
        </div>
        <!-- sections table -->
        <div class="mt-[6px] ml-[1px] w-[406px] h-[123px] flex flex-col bg-white shadow-[inset_1px_1px_0_#606060,inset_-1px_-1px_0_#fff] p-[1px] pb-[2px] pr-[0px]">
          <div class="h-[15px] flex-none flex bg-[#d4d0c8] text-center leading-[15px] border-b border-[#404040]">
            <div class="w-[110px] shadow-[inset_-1px_-1px_0_#808080,inset_1px_1px_0_#fff]">名称</div>
            <div class="w-[110px] shadow-[inset_-1px_-1px_0_#808080,inset_1px_1px_0_#fff]">剖切区域</div>
            <div class="flex-1 shadow-[inset_-1px_-1px_0_#808080,inset_1px_1px_0_#fff]">参照</div>
          </div>
          <div class="h-[18px] flex-none flex border-b border-[#d4d0c8]">
            <div class="w-[110px] flex items-center justify-between pl-[8px] pr-[2px] border-r border-[#404040]">
              <span class="flex items-center gap-[4px]"><svg width="9" height="8" viewBox="0 0 9 8"><path d="M1 4l2.500 3L8 1" fill="none" stroke="#30c050" stroke-width="1.800"/></svg><span class="font-['Liberation_Mono'] text-[10px]">A</span></span>
              <span class="w-[19px] h-[15px] flex items-center justify-center bg-[#d4d0c8] shadow-[inset_-1px_-1px_0_#404040,inset_1px_1px_0_#fff]"><svg width="8" height="5" viewBox="0 0 8 5"><path d="M0 0h8L4 4z" fill="#000"/></svg></span>
            </div>
            <div class="w-[110px] flex items-center justify-between pl-[5px] pr-[2px] border-r border-[#404040]">
              <span>完全</span>
              <span class="w-[19px] h-[15px] flex items-center justify-center bg-[#d4d0c8] shadow-[inset_-1px_-1px_0_#404040,inset_1px_1px_0_#fff]"><svg width="8" height="5" viewBox="0 0 8 5"><path d="M0 0h8L4 4z" fill="#000"/></svg></span>
            </div>
          </div>
          <div class="flex-1"></div>
          <div class="h-[20px] flex-none flex mr-[1px]">
            <div class="w-[20px] flex items-center justify-center bg-[#d4d0c8] shadow-[inset_-1px_-1px_0_#404040,inset_1px_1px_0_#fff]"><svg width="5" height="8" viewBox="0 0 5 8"><path d="M5 0v8L0 4z" fill="#000"/></svg></div>
            <div class="w-[196px] bg-[#d4d0c8] shadow-[inset_-1px_-1px_0_#404040,inset_1px_1px_0_#fff]"></div>
            <div class="flex-1 bg-[repeating-conic-gradient(#fff_0_25%,#d4d0c8_0_50%)] bg-[length:2px_2px]"></div>
            <div class="w-[20px] flex items-center justify-center bg-[#d4d0c8] shadow-[inset_-1px_-1px_0_#404040,inset_1px_1px_0_#fff]"><svg width="5" height="8" viewBox="0 0 5 8"><path d="M0 0v8l5-4z" fill="#000"/></svg></div>
          </div>
        </div>
        <div class="flex justify-end items-start gap-[5px] mt-[64px] -mr-[3px]">
          <div class="w-[40px] h-[19px] mt-[1px] mr-[3px] flex items-center justify-center text-[#909090] shadow-[inset_-1px_-1px_0_#404040,inset_1px_1px_0_#fff,inset_-2px_-2px_0_#808080]">确定</div>
          <div class="w-[39px] h-[19px] flex items-center justify-center shadow-[inset_-1px_-1px_0_#404040,inset_1px_1px_0_#fff,inset_-2px_-2px_0_#808080]">关闭</div>
          <div class="w-[39px] h-[19px] mt-[1px] flex items-center justify-center text-[#909090] shadow-[inset_-1px_-1px_0_#404040,inset_1px_1px_0_#fff,inset_-2px_-2px_0_#808080]">应用</div>
        </div>
      </div>
    </div>
  </div>

  <!-- red hand-drawn marks lie over everything -->
  <svg class="absolute left-0 top-0 pointer-events-none" width="1440" height="900" viewBox="0 0 1440 900" fill="none" stroke-linejoin="round">
    <path d="M459 435L468 433L480 423L489 418L498 413L530 412L565 413L627 416L667 424L693 433L723 441L758 454L807 454L847 453L863 457L872 460L880 465L890 474L897 481L902 488L905 508L903 528L896 538L887 547L868 556L847 565L818 570L787 574L733 577L617 577L587 571L567 570L530 557L508 555L497 547L477 532L452 510L449 490L450 475L453 460L457 448L461 438" stroke="#b8142c" stroke-width="1.500"/>
    <path d="M1233 328L1238 327L1290 329L1353 329L1377 332L1387 337L1393 346L1398 357L1400 372L1401 387L1397 398L1390 407L1375 419L1360 430L1345 433L1292 433L1263 429L1253 425L1233 410L1212 393L1205 380L1204 365L1213 350L1222 338L1233 328M1233 410L1217 433L1190 465L1128 525" stroke="#d01030" stroke-width="1.200"/>
  </svg>
</div>
</body>
</html>
